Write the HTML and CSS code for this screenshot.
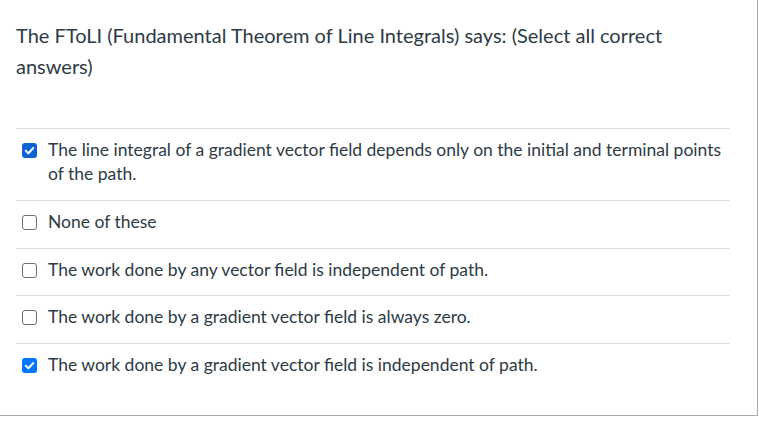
FILE: index.html
```html
<!DOCTYPE html>
<html>
<head>
<meta charset="utf-8">
<link rel="stylesheet" href="styles.css">
</head>
<body>
<div class="card">
  <div class="question">The FToLI (Fundamental Theorem of Line Integrals) says: (Select all correct answers)</div>
  <div class="answers">
    <div class="answer">
      <span class="box checked dark"><svg viewBox="0 0 15 15" width="15" height="15"><path d="M3.8 7.8 L6.4 10.3 L11.2 5" fill="none" stroke="#fff" stroke-width="2" stroke-linecap="round" stroke-linejoin="round"/></svg></span>
      <span class="label">The line integral of a gradient vector field depends only on the initial and terminal points of the path.</span>
    </div>
    <div class="answer">
      <span class="box"></span>
      <span class="label">None of these</span>
    </div>
    <div class="answer short">
      <span class="box"></span>
      <span class="label">The work done by any vector field is independent of path.</span>
    </div>
    <div class="answer">
      <span class="box"></span>
      <span class="label">The work done by a gradient vector field is always zero.</span>
    </div>
    <div class="answer">
      <span class="box checked"><svg viewBox="0 0 15 15" width="15" height="15"><path d="M3.8 7.8 L6.4 10.3 L11.2 5" fill="none" stroke="#fff" stroke-width="2" stroke-linecap="round" stroke-linejoin="round"/></svg></span>
      <span class="label">The work done by a gradient vector field is independent of path.</span>
    </div>
  </div>
</div>
</body>
</html>
```
FILE: styles.css
```css
html, body {
  margin: 0;
  padding: 0;
  background: #fff;
}
body {
  font-family: Lato, "Open Sans", sans-serif;
  color: #2d3b45;
}
.card {
  width: 758px;
  height: 416px;
  box-sizing: border-box;
  border-right: 1px solid #aaaaaa;
  border-bottom: 1px solid #aaaaaa;
  padding: 20px 27px 0 16px;
}
.question {
  font-size: 20px;
  line-height: 31px;
  width: 700px;
}
.answers {
  margin-top: 46px;
}
.answer {
  display: flex;
  align-items: flex-start;
  border-top: 1px solid #dedede;
  padding: 9px 0 14px 0;
  font-size: 17.5px;
  line-height: 24px;
}
.answer.short {
  padding-bottom: 13px;
}
.box {
  flex: none;
  width: 15px;
  height: 15px;
  box-sizing: border-box;
  margin: 5px 11px 0 6px;
  border: 1.5px solid #6f6f6f;
  border-radius: 3px;
  background: #fff;
  display: flex;
}
.box.checked {
  border: none;
  background: #0075ff;
}
.box.checked.dark {
  background: #0c63d4;
}
.label {
  flex: 1;
}
```
